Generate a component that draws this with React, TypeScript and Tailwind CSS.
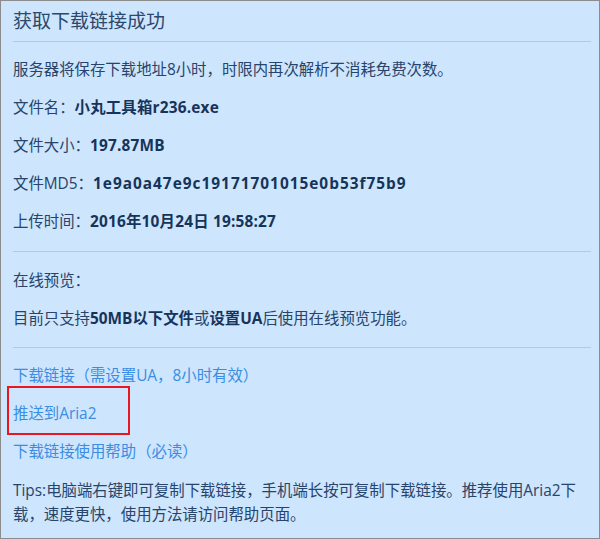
// App.tsx — download-link result panel
const FONT = { fontFamily: '"Open Sans", "Noto Sans CJK SC", sans-serif' };

export default function App() {
    return (
        <div
            className="w-[600px] h-[539px] bg-[#cde5fd] border border-[#8c8c8c] pl-[12px] pr-[8px] text-[15.4px] text-[#28446a] overflow-hidden"
            style={FONT}
        >
            {/* ── Header ─────────────────────────────── */}
            <div className="h-[40px] flex items-center text-[19px] text-[#2c486c]">获取下载链接成功</div>
            <Divider />

            <div className="mt-[9px]">
                <Row>服务器将保存下载地址8小时，时限内再次解析不消耗免费次数。</Row>
                <Row label="文件名：" value="小丸工具箱r236.exe" />
                <Row label="文件大小：" value="197.87MB" />
                <Row label="文件MD5：" value="1e9a0a47e9c19171701015e0b53f75b9" wide />
                <Row label="上传时间：" value="2016年10月24日 19:58:27" />
            </div>

            <div className="mt-[10px]"><Divider /></div>

            {/* ── Preview ────────────────────────────── */}
            <div className="mt-[10px]">
                <Row>在线预览：</Row>
                <Row>
                    目前只支持<b className="font-bold text-[#16345a]">50MB以下文件</b>或<b className="font-bold text-[#16345a]">设置UA</b>后使用在线预览功能。
                </Row>
            </div>

            <div className="mt-[9px]"><Divider /></div>

            {/* ── Links ──────────────────────────────── */}
            <div className="mt-[9px] text-[#3a8de3]">
                <Row>下载链接（需设置UA，8小时有效）</Row>
                <div className="relative h-[38px] flex items-center">
                    推送到Aria2
                    <span className="absolute left-[-6px] top-[-9px] w-[123px] h-[49px] border-2 border-[#e8161f]" />
                </div>
                <Row>下载链接使用帮助（必读）</Row>
            </div>

            <p className="mt-[8px] leading-[24px]">
                Tips:电脑端右键即可复制下载链接，手机端长按可复制下载链接。推荐使用Aria2下
                <br />
                载，速度更快，使用方法请访问帮助页面。
            </p>
        </div>
    );
}

function Divider() {
    return <div className="h-px bg-[#a5cef4]" />;
}

function Row({
    label,
    value,
    wide,
    children,
}: {
    label?: string;
    value?: string;
    wide?: boolean;
    children?: React.ReactNode;
}) {
    return (
        <div className="h-[38px] flex items-center whitespace-nowrap">
            {children}
            {label && <span>{label}</span>}
            {value && (
                <span className={wide ? "font-bold text-[#16345a] tracking-[1px]" : "font-bold text-[#16345a] tracking-[0.2px]"}>
                    {value}
                </span>
            )}
        </div>
    );
}
